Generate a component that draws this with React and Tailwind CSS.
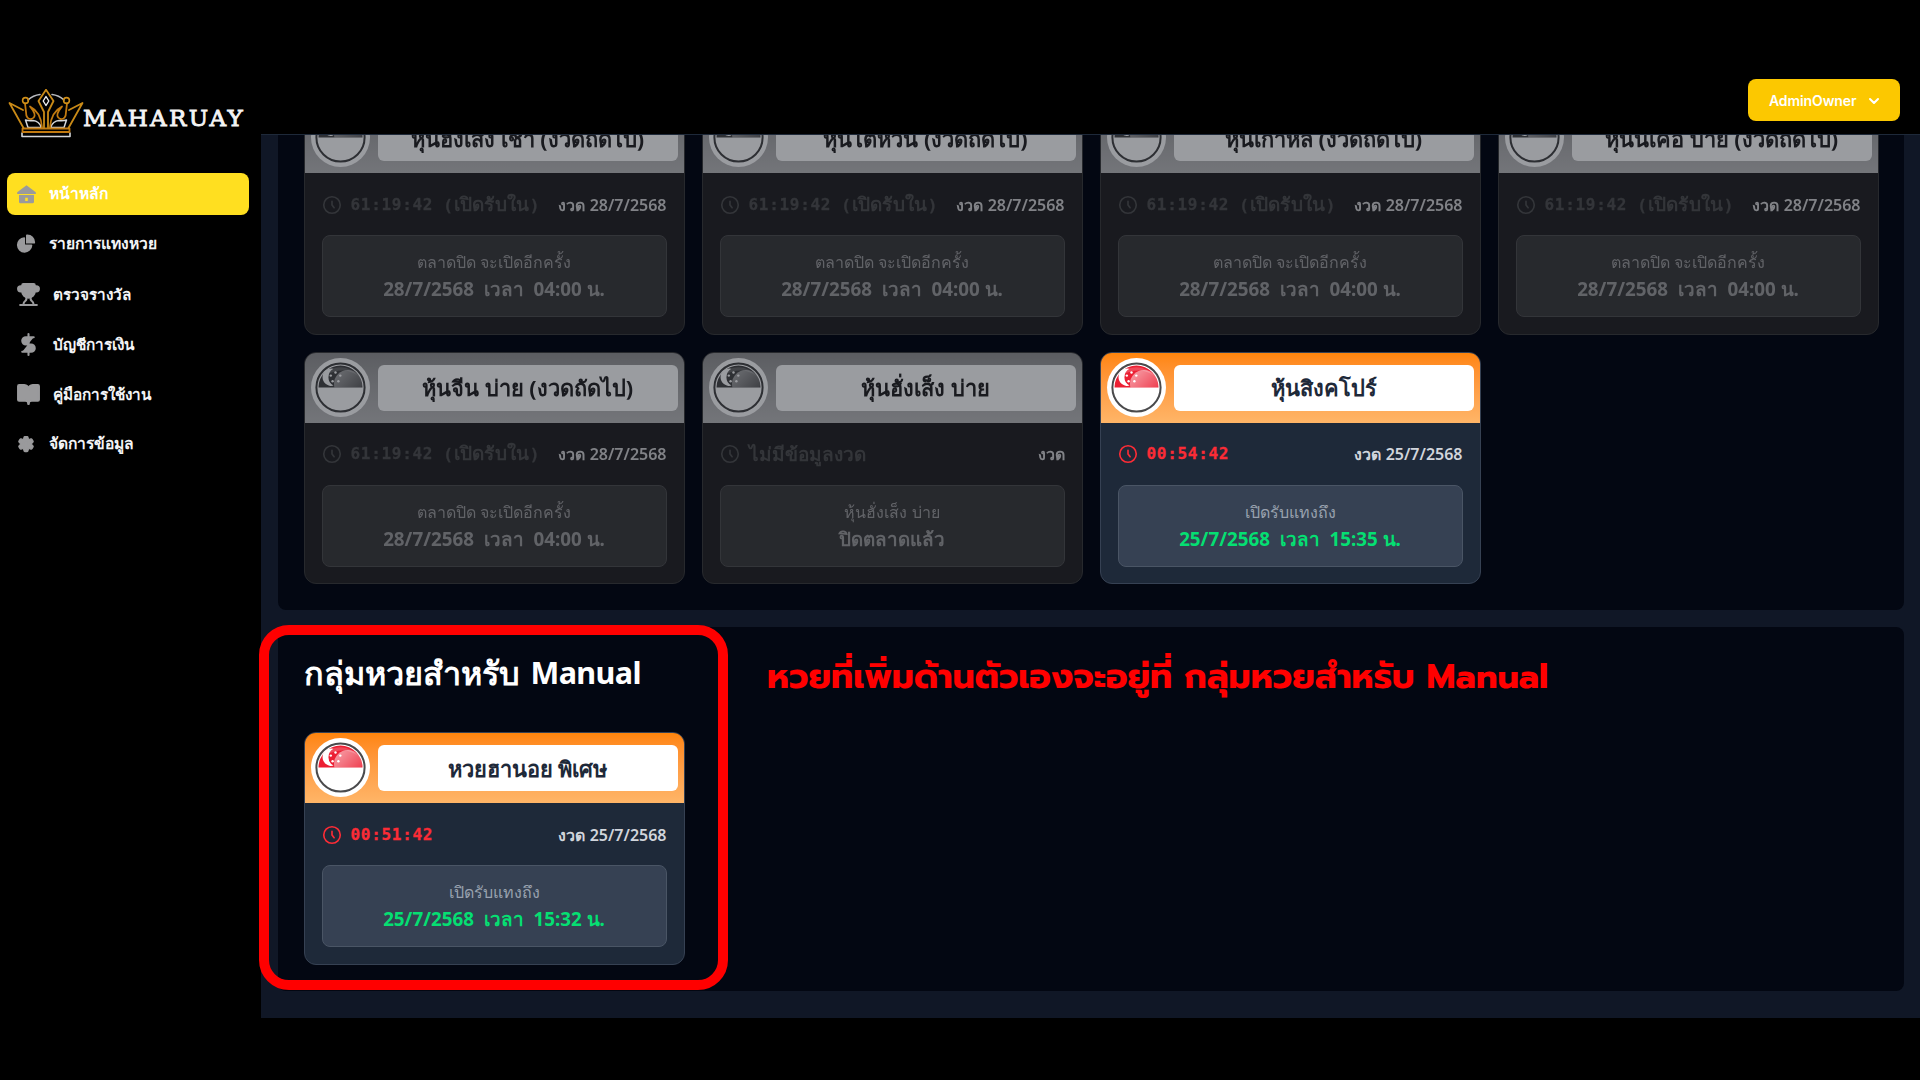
import { BookOpen, ChevronDown, DollarSign, Trophy } from "lucide-react";
import { HiOutlineCog6Tooth } from "react-icons/hi2";

function Crown() {
  return (
    <svg className="h-[52px] w-[78px] shrink-0" viewBox="0 0 78 52" fill="none" strokeLinejoin="round" strokeLinecap="round">
      <path d="M20 11 A21 21 0 0 1 32 5.500 M44 5.500 A21 21 0 0 1 56 11" stroke="#b9bbc0" strokeWidth="1.600" />
      <path d="M17.500 31 L20 38.500 H33.500 Q31 32 25 31.500 Q21 32 17.500 31 Z M58.500 31 L56 38.500 H42.500 Q45 32 51 31.500 Q55 32 58.500 31 Z" stroke="#d5d7da" strokeWidth="1.500" />
      <path d="M14 44 V47.500 H62 V44" stroke="#d5d7da" strokeWidth="1.600" />
      <path d="M14.500 39.500 H61.500 V43 H14.500 Z" stroke="#c27a10" strokeWidth="1.800" />
      <path d="M15.500 39 L1.500 14 L15 21 M60.500 39 L74.500 14 L61 21" stroke="#c98a17" strokeWidth="1.800" />
      <path d="M17 14.500 L18 23 Q18 30.500 23.500 30 Q29 28 25 21.500 L22 17.500 Q33 23 34 38.500 M59 14.500 L58 23 Q58 30.500 52.500 30 Q47 28 51 21.500 L54 17.500 Q43 23 42 38.500" stroke="#c27a10" strokeWidth="1.800" />
      <circle cx="17.500" cy="11.500" r="2.900" stroke="#d08f18" strokeWidth="1.600" />
      <circle cx="58.500" cy="11.500" r="2.900" stroke="#d08f18" strokeWidth="1.600" />
      <path d="M38 0.800 L45.500 12 L40 23 V38.500 M38 0.800 L30.500 12 L36 23 V38.500" stroke="#c98a17" strokeWidth="1.800" />
      <path d="M38 7.500 L40.800 12 L38 16.500 L35.200 12 Z" stroke="#f1f1f1" strokeWidth="1.400" />
    </svg>
  );
}

function HomeIcon() {
  return (
    <svg className="ml-px size-[19px] shrink-0" viewBox="0 0 19 19" fill="currentColor">
      <path d="M9.500 0.200 L18.800 7.200 V9 H0.200 V7.200 Z" />
      <path fillRule="evenodd" d="M2 10 H17 V16.700 Q17 18.200 15.500 18.200 H3.500 Q2 18.200 2 16.700 Z M8.200 12.800 V16 H10.800 V12.800 Z" />
    </svg>
  );
}

function PieIcon() {
  return (
    <svg className="size-[20px] shrink-0" viewBox="0 0 22 21" fill="currentColor">
      <path d="M16.975 11H10V4.025a1 1 0 0 0-1.066-.998 8.500 8.500 0 1 0 9.039 9.039.999.999 0 0 0-1-1.066h.002Z" />
      <path d="M12.500 0c-.157 0-.311.01-.565.027A1 1 0 0 0 11 1.020V10h8.975a1 1 0 0 0 1-.935c.013-.188.028-.374.028-.565A8.510 8.510 0 0 0 12.500 0Z" />
    </svg>
  );
}

function ClockIcon() {
  return (
    <svg className="-ml-px size-[22px] shrink-0" viewBox="0 0 24 24" fill="none" stroke="currentColor" strokeWidth="1.800" strokeLinecap="round" strokeLinejoin="round">
      <path d="M12 8v4l2.300 3m6.700-3a9 9 0 11-18 0 9 9 0 0118 0z" />
    </svg>
  );
}

function Flag() {
  return (
    <svg className="size-[51px]" viewBox="0 0 51 51">
      <defs>
        <linearGradient id="gloss" x1="0" y1="0" x2="1" y2="1">
          <stop offset="0" stopColor="#fff" stopOpacity="0.6" />
          <stop offset="1" stopColor="#fff" stopOpacity="0.05" />
        </linearGradient>
        <clipPath id="upper"><path d="M2 25.500 A23.500 23.500 0 0 1 49 25.500 Z" /></clipPath>
      </defs>
      <circle cx="25.500" cy="25.500" r="24.100" fill="#fff" stroke="#4a4a4c" strokeWidth="2" />
      <path d="M3.500 25.500 A22 22 0 0 1 47.500 25.500 Z" fill="#ec1f33" />
      <g clipPath="url(#upper)">
        <path d="M8 14 A22 22 0 0 1 43 14 Q30 3 8 14 Z" fill="#fff" opacity="0.2" />
        <circle cx="33" cy="22" r="14" fill="url(#gloss)" />
      </g>
      <path d="M18.500 6.800 A8.700 8.700 0 1 0 18.500 23.600 A9.500 9.500 0 0 1 18.500 6.800 Z" fill="#fff" />
      <g fill="#fff">
        <circle cx="20.500" cy="10.500" r="1.200" />
        <circle cx="15.800" cy="13.600" r="1.200" />
        <circle cx="25.300" cy="13.600" r="1.200" />
        <circle cx="17.600" cy="19.300" r="1.200" />
        <circle cx="23.400" cy="19.300" r="1.200" />
      </g>
    </svg>
  );
}

const NEXT = { countdown: "61:19:42", hint: "เปิดรับใน", round: "28/7/2568", note: "ตลาดปิด จะเปิดอีกครั้ง", date: "28/7/2568", time: "04:00" };

const MARKETS = [
  { name: "หุ้นฮั่งเส็ง เช้า (งวดถัดไป)", ...NEXT },
  { name: "หุ้นไต้หวัน (งวดถัดไป)", ...NEXT },
  { name: "หุ้นเกาหลี (งวดถัดไป)", ...NEXT },
  { name: "หุ้นนิเคอิ บ่าย (งวดถัดไป)", ...NEXT },
  { name: "หุ้นจีน บ่าย (งวดถัดไป)", ...NEXT },
  { name: "หุ้นฮั่งเส็ง บ่าย", missing: "ไม่มีข้อมูลงวด", note: "หุ้นฮั่งเส็ง บ่าย", closed: "ปิดตลาดแล้ว" },
  { name: "หุ้นสิงคโปร์", open: true, countdown: "00:54:42", round: "25/7/2568", note: "เปิดรับแทงถึง", date: "25/7/2568", time: "15:35" },
];

const MANUAL = [
  { name: "หวยฮานอย พิเศษ", open: true, countdown: "00:51:42", round: "25/7/2568", note: "เปิดรับแทงถึง", date: "25/7/2568", time: "15:32" },
];

function Countdown({ countdown, hint, missing }) {
  return (
    <span className="flex items-center font-['DejaVu_Sans_Mono',monospace] text-[16px] leading-7 font-bold tracking-[0.700px] [-webkit-text-stroke:0.3px_currentColor]">
      {countdown}
      {hint && (
        <span className="ml-2.5">
          (<span className="font-['Noto_Sans',sans-serif] text-[19px] tracking-[0.3px] [-webkit-text-stroke:0]">{hint}</span>)
        </span>
      )}
      {missing && <span className="font-['Noto_Sans',sans-serif] text-[19px] tracking-normal [-webkit-text-stroke:0]">{missing}</span>}
    </span>
  );
}

function MarketCard({ name, open, countdown, hint, missing, round, note, date, time, closed }) {
  return (
    <article className={`flex h-[232.500px] flex-col overflow-hidden rounded-xl border border-gray-700 bg-gray-800 ${open ? "" : "opacity-60 grayscale"}`}>
      <header className="flex h-[70px] shrink-0 items-center gap-2 bg-linear-to-b from-[#ff8509] to-[#ffb567] px-1.5">
        <div className="-mt-px flex size-[59px] shrink-0 items-center justify-center rounded-full bg-white">
          <Flag />
        </div>
        <h3 className="flex h-[46px] flex-1 items-center justify-center rounded-md bg-white pt-0.5 text-[21.800px] font-bold text-gray-800">{name}</h3>
      </header>
      <div className="flex flex-1 flex-col gap-[17px] p-[17px]">
        <div className="flex h-7 items-center justify-between pt-px whitespace-nowrap">
          <div className={`flex items-center gap-2 ${open ? "text-[#fb2c36]" : "text-gray-600"}`}>
            <ClockIcon />
            <Countdown countdown={countdown} hint={hint} missing={missing} />
          </div>
          <span className="text-base font-semibold text-gray-300">งวด {round}</span>
        </div>
        <div className="flex h-[82px] flex-col items-center justify-center rounded-lg border border-gray-600 bg-gray-700">
          <p className="text-base leading-[26px] text-gray-400">{note}</p>
          <p className={`text-[18.800px] leading-7 font-bold whitespace-pre ${open ? "text-[#05df72]" : "text-gray-400"}`}>
            {closed ?? `${date}  เวลา  ${time} น.`}
          </p>
        </div>
      </div>
    </article>
  );
}

const ICON = "size-[25px] shrink-0 fill-current";

const MENU = [
  { label: "หน้าหลัก", icon: <HomeIcon />, active: true },
  { label: "รายการแทงหวย", icon: <PieIcon /> },
  { label: "ตรวจรางวัล", icon: <Trophy className={ICON} />, large: true },
  { label: "บัญชีการเงิน", icon: <DollarSign className={ICON} />, large: true },
  { label: "คู่มือการใช้งาน", icon: <BookOpen className={ICON} />, large: true },
  { label: "จัดการข้อมูล", icon: <HiOutlineCog6Tooth className="size-[20px] shrink-0 fill-current" /> },
];

function Sidebar() {
  return (
    <aside className="flex w-[261px] shrink-0 flex-col px-[7px] pt-[89px]">
      <div className="flex h-[52px] items-center pl-px">
        <Crown />
        <span className="-ml-[3px] pt-1.5 font-['DejaVu_Serif',serif] text-[23px] leading-none tracking-[2.300px] text-[#f4f4f4] [-webkit-text-stroke:0.9px_#f4f4f4]">MAHARUAY</span>
      </div>
      <nav className="mt-8 flex w-[242px] flex-col gap-2">
        {MENU.map(({ label, icon, active, large }) => (
          <a key={label} className={`flex h-[42px] items-center rounded-lg pl-[9px] font-semibold ${large ? "gap-3 text-[15.300px]" : "gap-[13px] text-[15.600px]"} ${active ? "bg-[#ffdf20] text-white" : "text-gray-100"}`}>
            <span className={large ? "w-[25px] text-[#9a9a9c]" : "w-5 text-[#9a9a9c]"}>{icon}</span>
            {label}
          </a>
        ))}
      </nav>
    </aside>
  );
}

export default function App() {
  return (
    <div className="relative flex h-[1080px] w-[1920px] overflow-hidden bg-black font-['Noto_Sans',sans-serif]">
      <Sidebar />
      <div className="flex h-[1018px] min-w-0 flex-1 flex-col">
        <header className="flex h-[135px] shrink-0 items-end justify-end border-b border-gray-800 pr-5 pb-[13px]">
          <button className="flex h-[42px] w-[152px] items-center justify-between rounded-lg bg-[#fcc800] pt-px pr-[18px] pl-[21px] font-['Inter',sans-serif] text-sm font-semibold tracking-[-0.1px] text-white">
            AdminOwner
            <ChevronDown className="size-4" strokeWidth={3} />
          </button>
        </header>
        <main className="flex flex-1 flex-col justify-end gap-[17px] overflow-hidden bg-[#101726] pr-4 pb-[27px] pl-[17px]">
          <section className="shrink-0 rounded-lg bg-gray-950 px-[25.500px] py-[26px]">
            <div className="grid grid-cols-4 gap-[17px]">
              {MARKETS.map((m) => <MarketCard key={m.name} {...m} />)}
            </div>
          </section>
          <section className="h-[364px] shrink-0 rounded-lg bg-gray-950 px-[25.500px] pt-[26px]">
            <h2 className="flex h-[38px] items-center gap-[11px] text-[32.400px] font-bold text-white">
              กลุ่มหวยสำหรับ <span className="pt-0.5 text-[30.500px] tracking-[-0.600px]">Manual</span>
            </h2>
            <div className="mt-[41px] grid grid-cols-4 gap-[17px]">
              {MANUAL.map((m) => <MarketCard key={m.name} {...m} />)}
            </div>
          </section>
        </main>
      </div>
      <div className="absolute top-[625px] left-[259px] h-[365px] w-[469px] rounded-[30px] border-[10px] border-[#ff0000]" />
      <p className="absolute top-[651px] left-[767px] font-['Prompt','Kanit','Noto_Sans',sans-serif] text-[34.700px] leading-[52px] font-bold whitespace-nowrap text-[#ff0000]">
        หวยที่เพิ่มด้านตัวเองจะอยู่ที่ กลุ่มหวยสำหรับ Manual
      </p>
    </div>
  );
}
